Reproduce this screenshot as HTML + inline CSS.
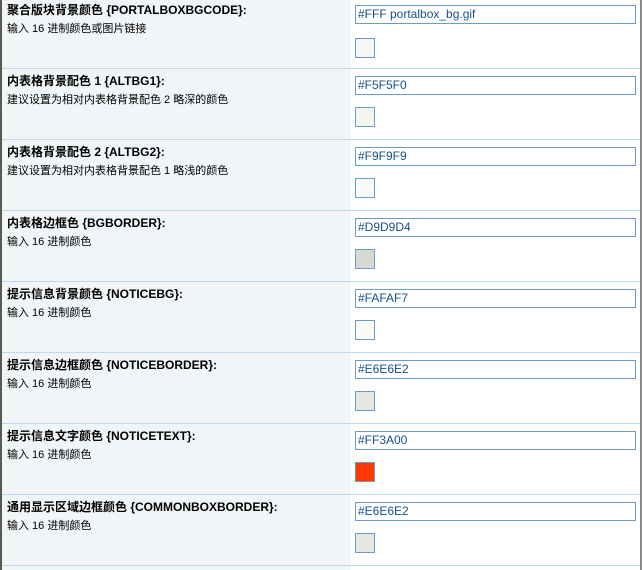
<html><head><style>
body{margin:0;width:643px;height:570px;overflow:hidden;background:#fff;font-family:"Liberation Sans","Noto Sans CJK SC",sans-serif;position:relative}
.l{position:absolute;left:0;top:0;width:351px;height:570px;background:#F1F5F8}
.lb{position:absolute;left:0;top:0;width:2px;height:570px;background:#5a5a50}
.rb{position:absolute;left:640px;top:0;width:2px;height:570px;background:#8a8a80}
.row{position:absolute;left:2px;width:638px;height:71px}
.sep{position:absolute;left:2px;width:638px;height:1px;background:#BCDCEE}
.t{position:absolute;left:5px;top:3px;font-size:12px;font-weight:bold;color:#000;white-space:nowrap}
.d{position:absolute;left:5px;top:22px;font-size:11px;color:#000;white-space:nowrap}
.in{position:absolute;left:353px;top:7px;width:277px;height:17px;border:1px solid #6B9BCB;background:#fff;font-size:12px;color:#15508A;line-height:17px;padding-left:2px;box-sizing:content-box}
.sw{position:absolute;left:353px;top:38px;width:18px;height:18px;border:1px solid #6B9BCB}
</style></head><body>
<div class="l"></div><div class="lb"></div><div class="rb"></div>

<div class="row" style="top:-2px"><div class="t">聚合版块背景颜色 {PORTALBOXBGCODE}:</div><div class="d">输入 16 进制颜色或图片链接</div><div class="in">#FFF portalbox_bg.gif</div><div class="sw" style="background:#f6f6f6;top:40px"></div></div>
<div class="sep" style="top:68px"></div>
<div class="row" style="top:69px"><div class="t">内表格背景配色 1 {ALTBG1}:</div><div class="d">建议设置为相对内表格背景配色 2 略深的颜色</div><div class="in">#F5F5F0</div><div class="sw" style="background:#F5F5F0"></div></div>
<div class="sep" style="top:139px"></div>
<div class="row" style="top:140px"><div class="t">内表格背景配色 2 {ALTBG2}:</div><div class="d">建议设置为相对内表格背景配色 1 略浅的颜色</div><div class="in">#F9F9F9</div><div class="sw" style="background:#F9F9F9"></div></div>
<div class="sep" style="top:210px"></div>
<div class="row" style="top:211px"><div class="t">内表格边框色 {BGBORDER}:</div><div class="d">输入 16 进制颜色</div><div class="in">#D9D9D4</div><div class="sw" style="background:#D9D9D4"></div></div>
<div class="sep" style="top:281px"></div>
<div class="row" style="top:282px"><div class="t">提示信息背景颜色 {NOTICEBG}:</div><div class="d">输入 16 进制颜色</div><div class="in">#FAFAF7</div><div class="sw" style="background:#FAFAF7"></div></div>
<div class="sep" style="top:352px"></div>
<div class="row" style="top:353px"><div class="t">提示信息边框颜色 {NOTICEBORDER}:</div><div class="d">输入 16 进制颜色</div><div class="in">#E6E6E2</div><div class="sw" style="background:#E6E6E2"></div></div>
<div class="sep" style="top:423px"></div>
<div class="row" style="top:424px"><div class="t">提示信息文字颜色 {NOTICETEXT}:</div><div class="d">输入 16 进制颜色</div><div class="in">#FF3A00</div><div class="sw" style="background:#FF3A00"></div></div>
<div class="sep" style="top:494px"></div>
<div class="row" style="top:495px"><div class="t">通用显示区域边框颜色 {COMMONBOXBORDER}:</div><div class="d">输入 16 进制颜色</div><div class="in">#E6E6E2</div><div class="sw" style="background:#E6E6E2"></div></div>
<div class="sep" style="top:565px"></div>
</body></html>
